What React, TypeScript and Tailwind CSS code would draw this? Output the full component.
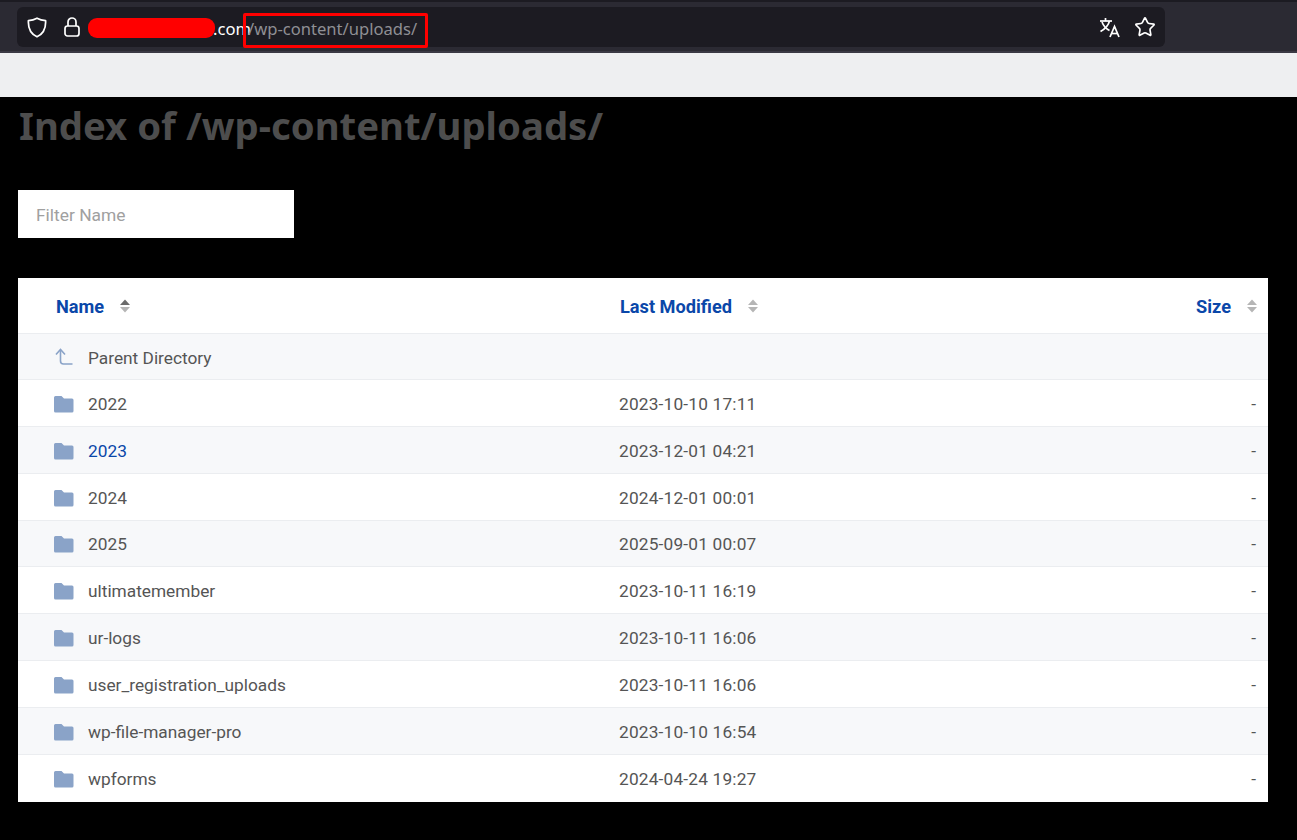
import { Star } from 'lucide-react';

const rows = [
  { name: '2022', date: '2023-10-10 17:11' },
  { name: '2023', date: '2023-12-01 04:21', link: true },
  { name: '2024', date: '2024-12-01 00:01' },
  { name: '2025', date: '2025-09-01 00:07' },
  { name: 'ultimatemember', date: '2023-10-11 16:19' },
  { name: 'ur-logs', date: '2023-10-11 16:06' },
  { name: 'user_registration_uploads', date: '2023-10-11 16:06' },
  { name: 'wp-file-manager-pro', date: '2023-10-10 16:54' },
  { name: 'wpforms', date: '2024-04-24 19:27' },
];

function SortIcon({ active }: { active?: boolean }) {
  return (
    <svg width="10" height="14" viewBox="0 0 10 14" className="shrink-0">
      <path d="M5 0.5 L10 6 L0 6 Z" fill={active ? '#6b6b6b' : '#b5b5b5'} />
      <path d="M0 8 L10 8 L5 13.5 Z" fill="#b5b5b5" />
    </svg>
  );
}

function FolderIcon() {
  return (
    <svg width="20" height="18" viewBox="0 0 20 18" className="shrink-0">
      <path
        d="M1.5 1 H7.5 L10 3.5 H18 A1.5 1.5 0 0 1 19.5 5 V16 A1.5 1.5 0 0 1 18 17.5 H1.5 A1.5 1.5 0 0 1 0 16 V2.5 A1.5 1.5 0 0 1 1.5 1 Z"
        fill="#8aa3c8"
      />
    </svg>
  );
}

function UpIcon() {
  return (
    <svg width="18" height="18" viewBox="0 0 18 18" fill="none" stroke="#8aa3c8" strokeWidth="1.6" className="shrink-0">
      <path d="M1 6.5 L5.5 1.5 L10 6.5" />
      <path d="M5.5 2 V13 A3 3 0 0 0 8.5 16 H17.5" />
    </svg>
  );
}

function ShieldIcon() {
  return (
    <svg width="20" height="21" viewBox="0 0 20 21" fill="none" stroke="white" strokeWidth="1.7" className="shrink-0">
      <path d="M10 1.2 C12.5 2.6 15.5 3.4 18.6 3.6 C19 11 16.5 16.8 10 19.8 C3.5 16.8 1 11 1.4 3.6 C4.5 3.4 7.5 2.6 10 1.2 Z" strokeLinejoin="round" />
    </svg>
  );
}

function LockIcon() {
  return (
    <svg width="16" height="20" viewBox="0 0 16 20" fill="none" stroke="white" strokeWidth="1.7" className="shrink-0">
      <rect x="1" y="9" width="14" height="10" rx="2.5" />
      <path d="M4 9 V5 A4 4 0 0 1 12 5 V9" />
    </svg>
  );
}

function TranslateIcon() {
  return (
    <svg width="21" height="21" viewBox="0 0 21 21" fill="none" stroke="white" strokeWidth="1.7" className="shrink-0">
      <path d="M1 4 H13" />
      <path d="M6.5 1 V4" />
      <path d="M10.5 4 C9.5 8 6 12 1.5 14.5" />
      <path d="M3 5 C4.5 9 7.5 12 10.5 13.5" />
      <path d="M11 20 L15.5 9.5 L20 20" />
      <path d="M12.5 16.5 H18.5" />
    </svg>
  );
}

export default function App() {
  return (
    <div className="min-h-[840px] bg-black font-['Roboto',sans-serif]">
      <div className="h-[53px] border-t-2 border-b-2 border-t-[#1c1b22] border-b-[#3a3944] bg-[#2b2a33] px-[17px] pt-[5px]">
        <div className="relative flex h-[40px] w-[1148px] items-center rounded-md bg-[#1c1b22] pl-[10px] pr-[9px]">
          <ShieldIcon />
          <div className="ml-[17px]">
            <LockIcon />
          </div>
          <span className="ml-[133px] pt-[4px] font-['Noto_Sans',sans-serif] text-[16.6px] leading-none text-white">.com</span>
          <span className="ml-[-3px] pt-[4px] font-['Noto_Sans',sans-serif] text-[16.6px] leading-none text-[#8f8f94]">/wp-content/uploads/</span>
          <div className="absolute left-[71px] top-[11px] h-[20px] w-[127px] rounded-[9px] bg-[#ff0000]" />
          <div className="absolute left-[226px] top-[6px] h-[35px] w-[185px] rounded-[2px] border-[3px] border-[#ff0000]" />
          <div className="ml-auto">
            <TranslateIcon />
          </div>
          <Star className="ml-[14px] h-[22px] w-[22px] text-white" strokeWidth={1.8} />
        </div>
      </div>
      <div className="h-[44px] bg-[#eeeff1]" />
      <div className="px-[18px]">
        <h1 className="h-[93px] pl-[1px] pt-[2px] font-['Noto_Sans',sans-serif] text-[38.3px] font-bold leading-[52px] text-[#4d4d4d]">Index of /wp-content/uploads/</h1>
        <input
          placeholder="Filter Name"
          className="block h-[48px] w-[276px] bg-white px-[18px] pt-[2px] text-[17.4px] text-[#333] outline-none placeholder:text-[#a0a0a0]"
        />
        <div className="mt-[40px] w-[1250px] bg-white text-[17.3px] text-[#555]">
          <div className="flex h-[56px] items-center border-b border-[#ebedf0] pt-[2px] text-[18.2px] font-bold text-[#0a47a9]">
            <div className="flex w-[601px] items-center gap-[16px] pl-[38px]">
              Name <SortIcon active />
            </div>
            <div className="flex items-center gap-[16px] pl-[1px]">
              Last Modified <SortIcon />
            </div>
            <div className="ml-auto flex items-center gap-[16px] pr-[11px]">
              Size <SortIcon />
            </div>
          </div>
          <div className="flex h-[46px] items-center border-b border-[#ebedf0] bg-[#f7f8fa] pl-[37px]">
            <UpIcon />
            <span className="ml-[15px] pt-[5px]">Parent Directory</span>
          </div>
          {rows.map((r, i) => (
            <div
              key={r.name}
              className={`flex h-[46.85px] items-center border-b border-[#ebedf0] pt-[2px] last:border-b-0 ${
                i % 2 === 1 ? 'bg-[#f7f8fa]' : 'bg-white'
              }`}
            >
              <div className="flex w-[601px] items-center gap-[14px] pl-[36px]">
                <FolderIcon />
                <span className={`pt-[2px] ${r.link ? 'text-[#0a47a9]' : ''}`}>{r.name}</span>
              </div>
              <span className="pt-[2px] tracking-[0.18px]">{r.date}</span>
              <span className="ml-auto pr-[12px] pt-[2px]">-</span>
            </div>
          ))}
        </div>
      </div>
    </div>
  );
}
